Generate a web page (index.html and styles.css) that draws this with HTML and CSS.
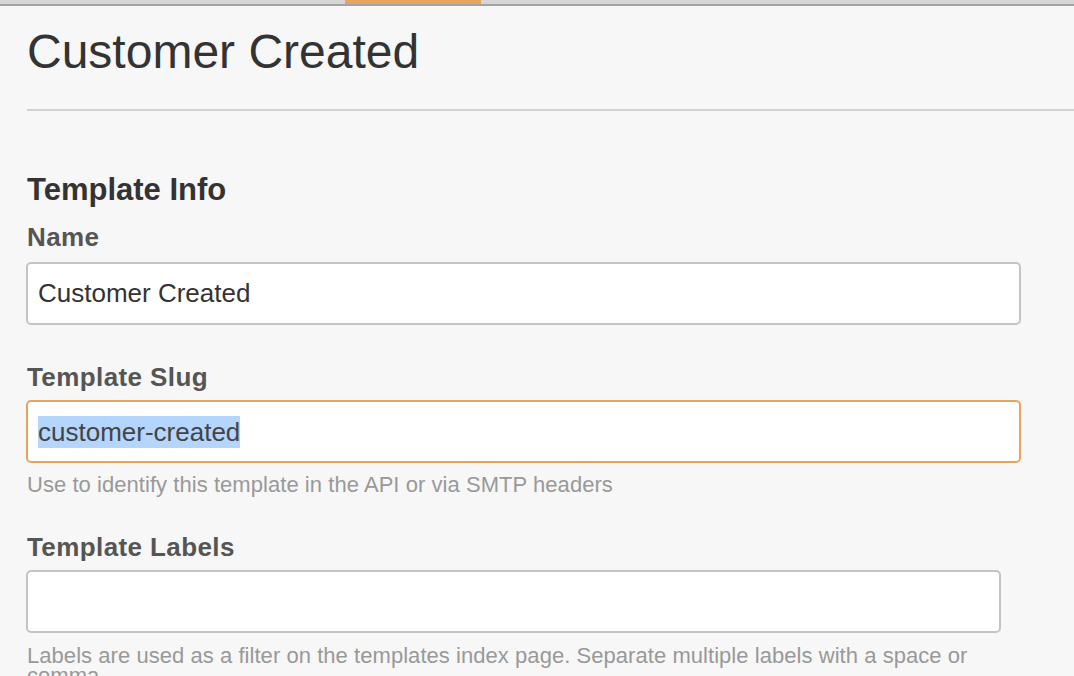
FILE: index.html
```html
<!DOCTYPE html>
<html lang="en">
<head>
<meta charset="utf-8">
<title>Customer Created</title>
<link rel="stylesheet" href="styles.css">
</head>
<body>
<div class="tabbar">
  <div class="tab-spacer"></div>
  <div class="tab-active"></div>
</div>
<main class="page">
  <h1 class="page-title">Customer Created</h1>
  <hr class="divider">
  <section class="form-section">
    <h2 class="section-title">Template Info</h2>
    <div class="form-group form-group-first">
      <label class="field-label">Name</label>
      <div class="field">Customer Created</div>
    </div>
    <div class="form-group">
      <label class="field-label">Template Slug</label>
      <div class="field field-focus"><span class="selected">customer-created</span></div>
      <p class="help">Use to identify this template in the API or via SMTP headers</p>
    </div>
    <div class="form-group form-group-narrow">
      <label class="field-label">Template Labels</label>
      <div class="field"></div>
      <p class="help">Labels are used as a filter on the templates index page. Separate multiple labels with a space or comma.</p>
    </div>
  </section>
</main>
</body>
</html>
```
FILE: styles.css
```css
html, body {
  margin: 0;
  padding: 0;
}
body {
  background: #f7f7f7;
  font-family: "Liberation Sans", Arial, sans-serif;
  color: #333;
  overflow: hidden;
}
.tabbar {
  display: flex;
  height: 4px;
  background: #d6d6d6;
  border-bottom: 2px solid #a3a3a3;
}
.tab-spacer {
  width: 345px;
}
.tab-active {
  width: 136px;
  background: #e8a35d;
}
.page {
  padding-left: 26px;
}
.page-title {
  margin: 18px 0 0 1px;
  font-size: 48px;
  line-height: 56px;
  font-weight: normal;
  color: #333;
}
.divider {
  margin: 29px 0 0 1px;
  border: 0;
  height: 2px;
  background: #d2d2d2;
}
.section-title {
  margin: 61px 0 0 1px;
  font-size: 31px;
  line-height: 36px;
  font-weight: bold;
  color: #333;
}
.form-group {
  width: 995px;
}
.form-group-narrow {
  width: 975px;
}
.field-label {
  display: block;
  margin: 37px 0 0 1px;
  font-size: 26px;
  line-height: 30px;
  font-weight: bold;
  color: #555;
  letter-spacing: 0.4px;
}
.form-group-first .field-label {
  margin-top: 14px;
}
.field {
  box-sizing: border-box;
  height: 63px;
  margin-top: 8px;
  padding: 0 10px;
  display: flex;
  align-items: center;
  background: #fff;
  border: 2px solid #c4c4c4;
  border-radius: 5px;
  font-size: 26px;
  color: #333;
}
.form-group-first .field {
  margin-top: 10px;
}
.field-focus {
  border-color: #e8a35d;
  color: #444;
}
.selected {
  display: inline-block;
  line-height: 32px;
  background: #b4d5fd;
}
.help {
  margin: 12px 0 0 1px;
  font-size: 22px;
  line-height: 20px;
  color: #999;
  letter-spacing: 0.05px;
}
.form-group-narrow .help {
  margin-top: 13px;
}
```
